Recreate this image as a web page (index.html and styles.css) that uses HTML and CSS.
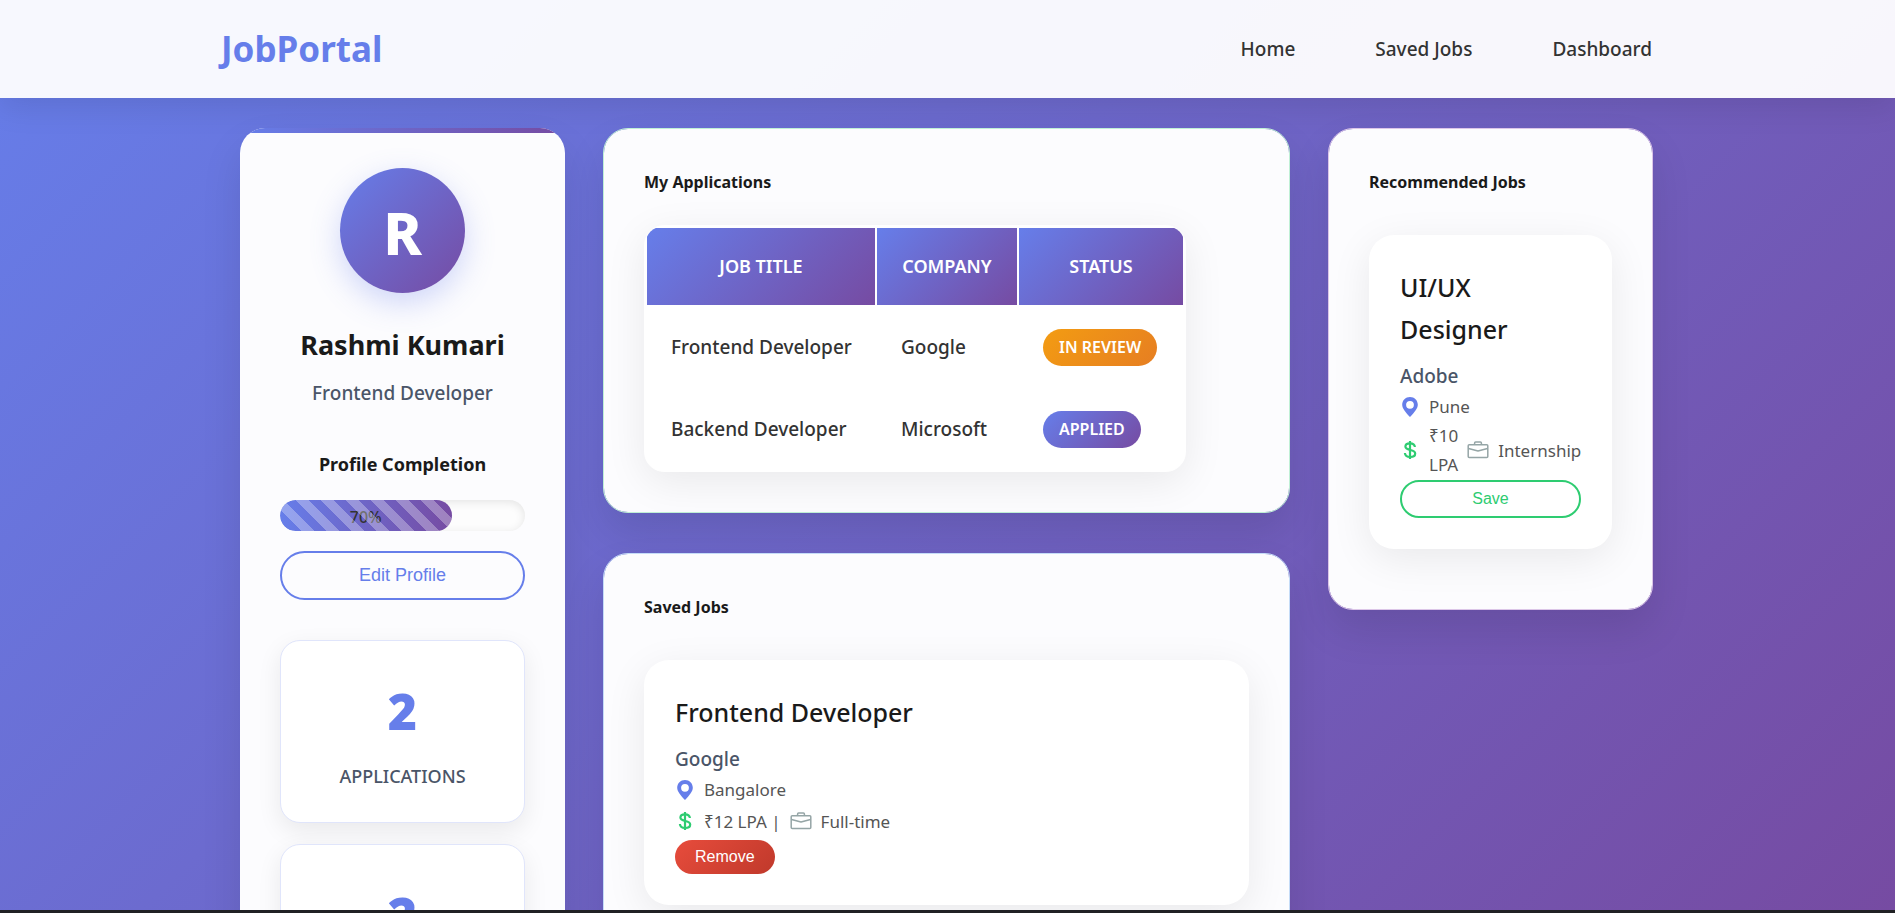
FILE: index.html
```html
<!DOCTYPE html>
<html lang="en">
<head>
<meta charset="utf-8">
<meta name="viewport" content="width=device-width, initial-scale=1">
<title>JobPortal</title>
<link rel="stylesheet" href="styles.css">
</head>
<body>
<svg class="sprite" aria-hidden="true">
  <symbol id="i-pin" viewBox="0 0 20 20"><path fill-rule="evenodd" d="M10 0C5.600 0 2.200 3.400 2.200 7.700c0 3.300 3 7.400 7.800 12.300 4.800-4.900 7.800-9 7.800-12.300C17.800 3.400 14.400 0 10 0zm0 3.900a3.900 3.900 0 1 1 0 7.800 3.900 3.900 0 0 1 0-7.800z" fill="currentColor"/></symbol>
  <symbol id="i-dollar" viewBox="0 0 20 20"><g fill="none" stroke="currentColor" stroke-width="2.200"><path d="M14.900 7C14.700 4.600 12.800 3.300 10 3.300c-2.800 0-4.600 1.300-4.600 3.300 0 4.600 9.800 2.200 9.800 6.900 0 2.200-2 3.500-5 3.500-3.200 0-5.100-1.400-5.300-4"/><path d="M10 1v18"/></g></symbol>
  <symbol id="i-case" viewBox="0 0 22 20"><g fill="none" stroke="currentColor" stroke-width="1.500" stroke-linejoin="round"><rect x="1.200" y="4.700" width="19.600" height="12.800" rx="1"/><path d="M7.600 4.500V3q0-1 1-1h4.800q1 0 1 1v1.500M1.500 8.500l9.500 2.400 9.500-2.400"/></g></symbol>
</svg>

<header class="navbar">
  <div class="nav-inner">
    <a class="logo" href="#">JobPortal</a>
    <nav class="nav-links">
      <a href="#">Home</a>
      <a href="#">Saved Jobs</a>
      <a href="#">Dashboard</a>
    </nav>
  </div>
</header>

<main class="dashboard">
  <aside class="card profile">
    <div class="avatar">R</div>
    <h2 class="name">Rashmi Kumari</h2>
    <p class="role">Frontend Developer</p>
    <p class="progress-label" id="pc">Profile Completion</p>
    <div class="progress" role="progressbar" aria-labelledby="pc" aria-valuenow="70" aria-valuemin="0" aria-valuemax="100">
      <div class="progress-fill" style="width:70%">70%</div>
    </div>
    <button class="btn btn-edit" type="button">Edit Profile</button>
    <div class="stats">
      <div class="stat"><div class="stat-value">2</div><div class="stat-label">APPLICATIONS</div></div>
      <div class="stat"><div class="stat-value">2</div><div class="stat-label">SAVED JOBS</div></div>
    </div>
  </aside>

  <div class="column">
    <section class="card applications">
      <h3 class="section-title">My Applications</h3>
      <table class="app-table">
        <colgroup><col class="c-title"><col class="c-company"><col class="c-status"></colgroup>
        <thead><tr><th>JOB TITLE</th><th>COMPANY</th><th>STATUS</th></tr></thead>
        <tbody>
          <tr><td>Frontend Developer</td><td>Google</td><td><span class="pill review">IN REVIEW</span></td></tr>
          <tr><td>Backend Developer</td><td>Microsoft</td><td><span class="pill applied">APPLIED</span></td></tr>
        </tbody>
      </table>
    </section>

    <section class="card saved">
      <h3 class="section-title">Saved Jobs</h3>
      <article class="job">
        <h4 class="job-title">Frontend Developer</h4>
        <p class="company">Google</p>
        <p class="meta"><svg class="icon pin"><use href="#i-pin"/></svg><span>Bangalore</span></p>
        <p class="meta pay"><svg class="icon dollar"><use href="#i-dollar"/></svg><span>₹12 LPA |</span><svg class="icon case"><use href="#i-case"/></svg><span>Full-time</span></p>
        <button class="btn btn-remove" type="button">Remove</button>
      </article>
    </section>
  </div>

  <aside class="card recommended">
    <h3 class="section-title">Recommended Jobs</h3>
    <article class="job">
      <h4 class="job-title">UI/UX Designer</h4>
      <p class="company">Adobe</p>
      <p class="meta"><svg class="icon pin"><use href="#i-pin"/></svg><span>Pune</span></p>
      <p class="meta pay"><svg class="icon dollar"><use href="#i-dollar"/></svg><span class="narrow">₹10 LPA</span><svg class="icon case"><use href="#i-case"/></svg><span>Internship</span></p>
      <button class="btn btn-save" type="button">Save</button>
    </article>
  </aside>
</main>
<div class="bottom-edge"></div>
</body>
</html>
```
FILE: styles.css
```css
* { box-sizing: border-box; margin: 0; padding: 0; }

body {
  min-height: 100vh;
  font-family: "Segoe UI", "Noto Sans", sans-serif;
  font-size: 18px;
  line-height: 29px;
  color: #1a1a1a;
  background: linear-gradient(135deg, #667eea 0%, #764ba2 100%) fixed;
}

.sprite { position: absolute; width: 0; height: 0; }

.navbar {
  background: rgba(255, 255, 255, 0.95);
  box-shadow: 0 8px 32px rgba(0, 0, 0, 0.1);
}
.nav-inner {
  max-width: 1453px;
  margin: 0 auto;
  padding: 25px 22px 25px 0;
  display: flex;
  align-items: center;
  justify-content: space-between;
}
.logo { font-size: 35px; line-height: 48px; font-weight: 700; color: #667eea; text-decoration: none; }
.nav-links { display: flex; gap: 80px; }
.nav-links a { font-size: 19px; font-weight: 500; color: #333; text-decoration: none; }

.dashboard {
  max-width: 1415px;
  margin: 0 auto;
  padding: 30px 2px 40px 0;
  display: grid;
  grid-template-columns: 325px minmax(0, 1fr) 325px;
  gap: 38px;
  align-items: start;
}
.column { display: grid; gap: 40px; }

.card {
  padding: 40px;
  border: 1px solid rgba(255, 255, 255, 0.3);
  border-radius: 25px;
  background: #fcfcfe;
  background-clip: padding-box;
  box-shadow: 0 20px 40px rgba(0, 0, 0, 0.1);
}
.applications { border-color: #c0f0d6; }
.saved { border-color: #c5dcf8; }
.recommended { border-color: #dcc6e8; padding-bottom: 60px; }

.profile {
  position: relative;
  overflow: hidden;
  border: 0;
  text-align: center;
}
.profile::before {
  content: "";
  position: absolute;
  inset: 0 0 auto 0;
  height: 5px;
  background: linear-gradient(90deg, #667eea, #764ba2);
}
.avatar {
  width: 125px;
  height: 125px;
  margin: 0 auto 30px;
  border-radius: 50%;
  display: grid;
  place-items: center;
  font-size: 58px;
  line-height: 80px;
  padding-top: 4px;
  font-weight: 800;
  color: #fff;
  background: linear-gradient(135deg, #667eea, #764ba2);
  box-shadow: 0 10px 30px rgba(102, 126, 234, 0.3);
}
.name { font-size: 27px; line-height: 44px; font-weight: 700; margin-bottom: 11px; }
.role { font-size: 19px; line-height: 30px; font-weight: 500; color: #4a5568; margin-bottom: 42px; }
.progress-label { font-size: 18px; font-weight: 700; margin-bottom: 21px; }
.progress {
  height: 31px;
  margin-bottom: 20px;
  border-radius: 16px;
  overflow: hidden;
  background: #fdfdfd;
  box-shadow: inset 0 2px 10px rgba(0, 0, 0, 0.1);
}
.progress-fill {
  position: relative;
  height: 100%;
  border-radius: 16px;
  overflow: hidden;
  font-size: 16px;
  line-height: 35px;
  font-weight: 500;
  color: #333;
  background: linear-gradient(90deg, #667eea, #764ba2);
}
.progress-fill::after {
  content: "";
  position: absolute;
  inset: 0;
  background: linear-gradient(45deg, rgba(255, 255, 255, 0.3) 25%, transparent 25%, transparent 50%, rgba(255, 255, 255, 0.3) 50%, rgba(255, 255, 255, 0.3) 75%, transparent 75%);
  background-size: 25px 25px;
  background-position: 16px 0;
}

.btn { font-family: Arial, "Liberation Sans", sans-serif; cursor: pointer; }
.btn-edit {
  width: 100%;
  height: 49px;
  border: 2px solid #667eea;
  border-radius: 25px;
  background: transparent;
  color: #667eea;
  font-size: 18px;
}

.stats { display: grid; gap: 21px; margin-top: 40px; }
.stat {
  padding: 30px 20px 31px;
  border: 1px solid #e0e5fb;
  border-radius: 20px;
  background: #fff;
  box-shadow: 0 8px 25px rgba(0, 0, 0, 0.08);
}
.stat-value { font-size: 50px; line-height: 80px; font-weight: 900; color: #667eea; margin-bottom: 11px; }
.stat-label { font-size: 18px; font-weight: 500; color: #4a5568; }

.section-title { font-size: 16px; line-height: 26px; font-weight: 700; }

.app-table {
  margin-top: 30px;
  border: 1px solid #fff;
  border-spacing: 2px;
  border-radius: 20px;
  overflow: hidden;
  background: #fff;
  box-shadow: 0 10px 40px rgba(0, 0, 0, 0.08);
  white-space: nowrap;
}
.c-title { width: 228px; }
.c-company { width: 140px; }
.c-status { width: 164px; }
.app-table th {
  padding: 24px 20px;
  font-size: 18px;
  font-weight: 600;
  color: #fff;
  background: linear-gradient(135deg, #667eea, #764ba2);
}
.app-table td {
  height: 80px;
  padding: 0 20px 0 24px;
  font-size: 19px;
  font-weight: 500;
  color: #333;
}
.pill {
  display: block;
  width: max-content;
  padding: 4px 16px;
  border-radius: 19px;
  font-size: 16px;
  font-weight: 600;
  color: #fff;
}
.review { background: linear-gradient(135deg, #f39c12, #e67e22); }
.applied { background: linear-gradient(135deg, #667eea, #764ba2); }

.job {
  margin-top: 40px;
  padding: 31px;
  border-radius: 25px;
  background: #fff;
  box-shadow: 0 10px 40px rgba(0, 0, 0, 0.08);
}
.job-title { font-size: 25px; line-height: 42px; font-weight: 500; }
.company { margin: 11px 0 1px; font-size: 19px; line-height: 30px; font-weight: 500; color: #4a5568; }
.meta { display: flex; align-items: center; gap: 9px; font-size: 17px; color: #555; }
.saved .pay { min-height: 34px; }
.icon { width: 20px; height: 20px; flex: none; }
.pin { color: #667eea; }
.dollar { color: #2ecc71; }
.case { width: 22px; color: #95a5a6; }
.narrow { width: min-content; }
.btn-remove {
  display: block;
  margin-top: 2px;
  padding: 8px 20px;
  border: 0;
  border-radius: 17px;
  font-size: 16px;
  line-height: 18px;
  color: #fff;
  background: linear-gradient(135deg, #e74c3c, #c0392b);
}
.btn-save {
  display: block;
  width: 100%;
  height: 38px;
  margin-top: 1px;
  border: 2px solid #2ecc71;
  border-radius: 19px;
  font-size: 16px;
  color: #2ecc71;
  background: transparent;
}

.bottom-edge { position: fixed; inset: auto 0 0 0; height: 3px; background: #202124; }
```
